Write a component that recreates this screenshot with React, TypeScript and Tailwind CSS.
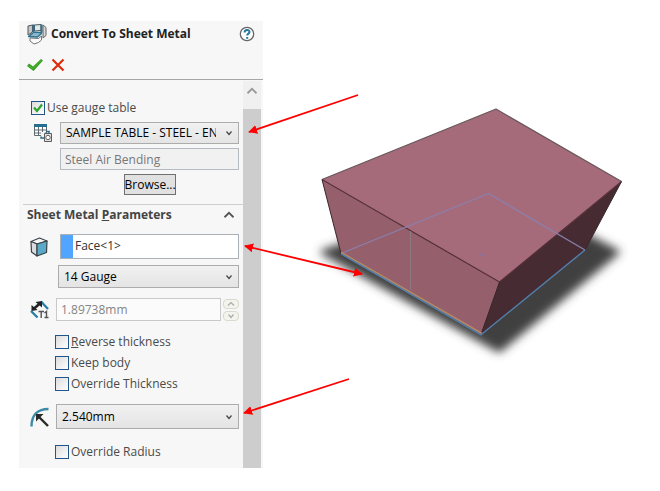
import { useState } from "react";
import type { ReactNode } from "react";

function SheetMetalIcon() {
   return (
      <svg viewBox="0 0 20 22" className="w-5 h-[22px] shrink-0" fill="none" strokeLinejoin="round">
         <path d="M1 3 6 1.500 15 1l4 3v9l-4 3-1 3-7 2-3.500-4L1 12z" fill="#f0f0f0" />
         <path d="M1 3 5.500 2v7L1 12z" fill="#c4c7c9" stroke="#555" />
         <path d="m7.500 2 6.500-.5v6L7.500 8z" fill="#dfe8ec" stroke="#555" />
         <path d="M6.500 1.500v8M14.500 1.500v8M6 9.500l9 .5" stroke="#2b7191" strokeWidth="2" />
         <path d="m6 10-4.500 3.500 9 .5 4-3.500" fill="#8fb9ca" stroke="#2b7191" strokeWidth="1.400" />
         <path d="m16 2 3 2.500v8L16 15z" fill="#d6d6d6" stroke="#666" />
         <path d="m3 15 8.500.5L14.500 13v4l-3 2.500L7 21l-4-3z" fill="#fafafa" stroke="#777" />
      </svg>
   );
}

function HelpIcon() {
   return (
      <svg viewBox="0 0 16 16" className="w-4 h-4" fill="none">
         <circle cx="8" cy="8" r="6.700" fill="#fff" stroke="#666" strokeWidth="1.300" />
         <path d="M5.600 6.400c0-3.200 4.900-3.100 4.900-.4 0 1.700-2.300 1.600-2.300 3.600" stroke="#22789f" strokeWidth="2" />
         <path d="M7.200 11h2v1.800h-2z" fill="#22789f" />
      </svg>
   );
}

function GaugeTableIcon() {
   return (
      <svg viewBox="0 0 20 20" className="w-5 h-5" fill="none">
         <path d="M1.500 1.500h12v11h-12z" fill="#fff" stroke="#5d696f" />
         <path d="M1 1h13v3H1z" fill="#246e90" />
         <path d="M1.500 7h12M1.500 10h12M5.500 4v9M9.500 4v9" stroke="#5d696f" />
         <path d="M8 9h4v2h7v8H11v-4H8z" fill="#f3f3f3" />
         <path d="M11.500 10.500h7v8h-7z" fill="#e2e2e2" stroke="#5d5d5d" />
         <path d="M8 13.500V15h3M13 8.500h3V10" stroke="#246e90" strokeWidth="1.500" />
         <circle cx="15" cy="14.500" r="2.200" fill="#fff" stroke="#666" />
      </svg>
   );
}

function FaceIcon() {
   return (
      <svg viewBox="0 0 18 20" className="w-[18px] h-5" stroke="#3b4247" strokeWidth="1.200" strokeLinejoin="round">
         <path d="m1 4.500 8.500-3.500L17 4 7 7z" fill="#f6f6f6" />
         <path d="m1 4.500 6 2.500v12l-5.500-4z" fill="#d9dcde" />
         <path d="m7 7 10-3-.5 11.500L7 19z" fill="#5aa9c8" />
      </svg>
   );
}

function ThicknessIcon() {
   return (
      <svg viewBox="0 0 19 19" className="w-[19px] h-[19px]" fill="none">
         <path d="m1 11 6.500 6.500M11 1.500 18 9" stroke="#2a7fa4" strokeWidth="2.400" />
         <path d="m3.500 9 7-6" stroke="#222" strokeWidth="2.600" />
         <path d="M1.500 11V5l6 5zM12 1v6.500L5.500 2z" fill="#222" />
         <path d="M8.500 11.500h5.500M11.200 11.500V18M14.500 13l2-1.500V18M14.500 17.500h4" stroke="#555" strokeWidth="1.400" />
      </svg>
   );
}

function RadiusIcon() {
   return (
      <svg viewBox="0 0 19 20" className="w-[19px] h-5" fill="none">
         <path d="M1.500 19.500C1.500 8 7.500 2 18.500 2" stroke="#3d8aa8" strokeWidth="2.400" />
         <path d="m9 10 9 9" stroke="#292929" strokeWidth="2.400" />
         <path d="M6 7h7.500L6 14.500z" fill="#292929" />
      </svg>
   );
}

function Chevron({ up = false, className = "w-2 h-2" }: { up?: boolean; className?: string }) {
   return (
      <svg viewBox="0 0 8 8" className={className} fill="none" stroke="currentColor" strokeWidth="1.200">
         <path d={up ? "m1 5.500 3-3 3 3" : "m1.500 2.500L4 5.500l2.500-3"} />
      </svg>
   );
}

function Select({ label, value, className }: { label: string; value: string; className: string }) {
   return (
      <div className={`relative ${className}`}>
         <select
            aria-label={label}
            className="appearance-none block w-full h-full pl-[5px] pr-[22px] overflow-hidden border border-[#acacac] bg-linear-to-b from-[#f1f1f1] to-[#e4e4e4] text-black"
         >
            <option>{value}</option>
         </select>
         <span className="absolute right-1.5 top-0 h-full flex items-center pointer-events-none text-[#444]">
            <Chevron />
         </span>
      </div>
   );
}

function Check({ children, checked = false }: { children: ReactNode; checked?: boolean }) {
   const [on, setOn] = useState(checked);
   return (
      <label className="flex items-center gap-0.5 h-[21px]">
         <span className="relative w-3.5 h-3.5">
            <input
               type="checkbox"
               checked={on}
               onChange={() => setOn(!on)}
               className="appearance-none block w-3.5 h-3.5 border border-[#1f568c] bg-linear-to-br from-[#dcdcdc] to-white"
            />
            {on && (
               <svg viewBox="0 0 14 14" className="absolute inset-0 pointer-events-none" fill="none">
                  <path d="m3 6.500 3 3.500 5-6.500" stroke="#2ca52c" strokeWidth="2.200" />
               </svg>
            )}
         </span>
         {children}
      </label>
   );
}

function Header() {
   return (
      <header className="h-[59px] border-b border-[#a5a5a5] pl-2 pr-2">
         <div className="flex items-center justify-between h-[26px]">
            <h1 className="flex items-center gap-1 font-bold text-[#222]">
               <SheetMetalIcon />
               Convert To Sheet Metal
            </h1>
            <button aria-label="Help">
               <HelpIcon />
            </button>
         </div>
         <div className="flex items-center gap-2 h-9">
            <button aria-label="OK">
               <svg viewBox="0 0 16 14" className="w-4 h-3.5">
                  <path d="m0 8 2-2.500 4 3L14 1l2 1.500L6.500 13z" fill="#2f9e1c" />
                  <path d="m1.500 7.500 4.500 3L14.500 2" stroke="#5cb844" fill="none" />
               </svg>
            </button>
            <button aria-label="Cancel">
               <svg viewBox="0 0 14 14" className="w-3.5 h-3.5" fill="none" stroke="#df2a0b" strokeWidth="2.200">
                  <path d="m1.500 1.500 11 11M12.500 1.500l-11 11" />
               </svg>
            </button>
         </div>
      </header>
   );
}

function Parameters() {
   return (
      <section className="mt-[9px] ml-1 border-t border-[#cfcfcf]">
         <div className="flex items-center justify-between h-[19px] pl-1 pr-2">
            <h2 className="font-bold text-[#444]">
               Sheet Metal <u>P</u>arameters
            </h2>
            <button aria-label="Collapse" className="text-[#555]">
               <Chevron up className="w-3 h-3" />
            </button>
         </div>
         <div className="flex items-center justify-between mt-2.5 pl-[7px] pr-1">
            <FaceIcon />
            <div className="flex w-[179px] h-[25px] border border-[#abb1b8] bg-white">
               <span className="w-3 bg-[#51a5ff]" />
               <input aria-label="Fixed face" defaultValue="Face<1>" className="min-w-0 flex-1 h-5 pl-0.5 text-[#333]" />
            </div>
         </div>
         <div className="flex justify-end mt-1.5 pr-1">
            <Select label="Gauge" value="14 Gauge" className="w-[181px] h-[23px]" />
         </div>
         <div className="flex items-center mt-2.5 pl-[7px] pr-1">
            <ThicknessIcon />
            <input
               aria-label="Thickness"
               disabled
               defaultValue="1.89738mm"
               className="ml-[7px] min-w-0 flex-1 h-[23px] pl-1 border border-[#c9c9c9] bg-[#fbfbfb] text-[#858585]"
            />
            <div className="flex flex-col gap-0.5 ml-0.5 text-[#aaa]">
               <button disabled aria-label="Increase" className="flex items-center justify-center w-4 h-2.5 rounded-sm border border-[#d9d9cd] bg-[#f4f4ee]">
                  <Chevron up />
               </button>
               <button disabled aria-label="Decrease" className="flex items-center justify-center w-4 h-2.5 rounded-sm border border-[#d9d9cd] bg-[#f4f4ee]">
                  <Chevron />
               </button>
            </div>
         </div>
         <div className="mt-2.5 pl-8">
            <Check>
               <span>
                  <u>R</u>everse thickness
               </span>
            </Check>
            <Check>Keep body</Check>
            <Check>Override Thickness</Check>
         </div>
         <div className="flex items-center justify-between mt-2.5 pl-[7px] pr-1">
            <RadiusIcon />
            <Select label="Bend radius" value="2.540mm" className="w-[183px] h-[25px]" />
         </div>
         <div className="mt-3 pl-8">
            <Check>Override Radius</Check>
         </div>
      </section>
   );
}

function Panel() {
   return (
      <aside className="flex flex-col w-[244px] min-h-[447px] shrink-0 self-start bg-[#f7f7f7] text-xs text-[#4a4a4a]">
         <Header />
         <div className="flex flex-1 pr-0.5 pt-px">
            <div className="flex-1 min-w-0">
               <div className="pt-4 pl-3 pr-1">
                  <Check checked>Use gauge table</Check>
                  <div className="flex items-center justify-between mt-1 pl-0.5">
                     <GaugeTableIcon />
                     <Select label="Gauge table" value="SAMPLE TABLE - STEEL - ENGLISH" className="w-[179px] h-[22px]" />
                  </div>
                  <div className="flex justify-end mt-1">
                     <input
                        aria-label="Table type"
                        readOnly
                        defaultValue="Steel Air Bending"
                        className="w-[179px] h-[22px] pl-1 border border-[#b4bac0] bg-[#f1f1f1] text-[#777]"
                     />
                  </div>
                  <div className="flex justify-center w-[179px] mt-1 ml-auto">
                     <button className="w-[52px] h-[21px] border border-[#707070] bg-[#e1e1e1] text-black">Browse...</button>
                  </div>
               </div>
               <Parameters />
            </div>
            <div className="flex flex-col w-[18px] bg-[#cdcdcd]">
               <button aria-label="Scroll up" className="flex justify-center pt-1 h-7 bg-[#f0f0f0] text-[#999]">
                  <Chevron up className="w-3 h-3" />
               </button>
            </div>
         </div>
      </aside>
   );
}

function Model() {
   return (
      <svg
         viewBox="263 21 397 447"
         preserveAspectRatio="xMinYMin meet"
         className="relative z-10 block w-full h-[447px] overflow-visible pointer-events-none"
         fill="none"
         strokeLinejoin="round"
      >
         <defs>
            <filter id="shadow" x="-20%" y="-20%" width="140%" height="140%">
               <feGaussianBlur stdDeviation="5" />
            </filter>
            <marker id="tip" viewBox="0 0 10 10" refX="9" refY="5" markerWidth="9" markerHeight="9" markerUnits="userSpaceOnUse" orient="auto-start-reverse">
               <path d="M0 0l10 5-10 5z" fill="#f00" />
            </marker>
         </defs>
         <path d="m323 252 176 98 118-98-116-60z" fill="#3f3f3f" stroke="#3f3f3f" strokeWidth="5" filter="url(#shadow)" />
         <path d="M322 179.500 499.500 282 481 334.500 341 253.500z" fill="#955f6c" />
         <path d="M499.500 282 621.500 181.500 585 250 481 334.500z" fill="#462b32" />
         <path d="M322 179.500 496 109l125.500 72.500L499.500 282z" fill="#a66b7a" />
         <path d="M322 179.500 496 109l125.500 72.500" stroke="#66575a" strokeWidth="1.200" />
         <path d="M322 179.500 499.500 282l122-100.500" stroke="#553039" strokeWidth="1.200" />
         <path d="m322 179.500 19 74M499.500 282 481 334.500M621.500 181.500 585 250" stroke="#38272b" />
         <path d="m341 253.500 147.500-60 96.500 56.500" stroke="#8a80ad" strokeWidth="1.300" />
         <path d="M410.500 231v59" stroke="#8f7980" strokeWidth="1.300" />
         <path d="m341 252.300 141 81" stroke="#b58c62" strokeWidth="1.500" />
         <path d="m341 253.800 140 81L585 250" stroke="#527fae" strokeWidth="1.400" />
         <circle cx="482.500" cy="254.500" r="1.200" fill="#777ab0" />
         <g stroke="#f00" strokeWidth="1.800">
            <path d="M358 95 249 132" markerEnd="url(#tip)" />
            <path d="M245 246l117 28" markerStart="url(#tip)" markerEnd="url(#tip)" />
            <path d="M349 379 244 413" markerEnd="url(#tip)" />
         </g>
      </svg>
   );
}

export default function App() {
   return (
      <main className="flex min-h-screen bg-white pt-[21px] pl-[19px] font-['Open_Sans','Noto_Sans',sans-serif]">
         <Panel />
         <div className="flex-1 min-w-0">
            <Model />
         </div>
      </main>
   );
}
